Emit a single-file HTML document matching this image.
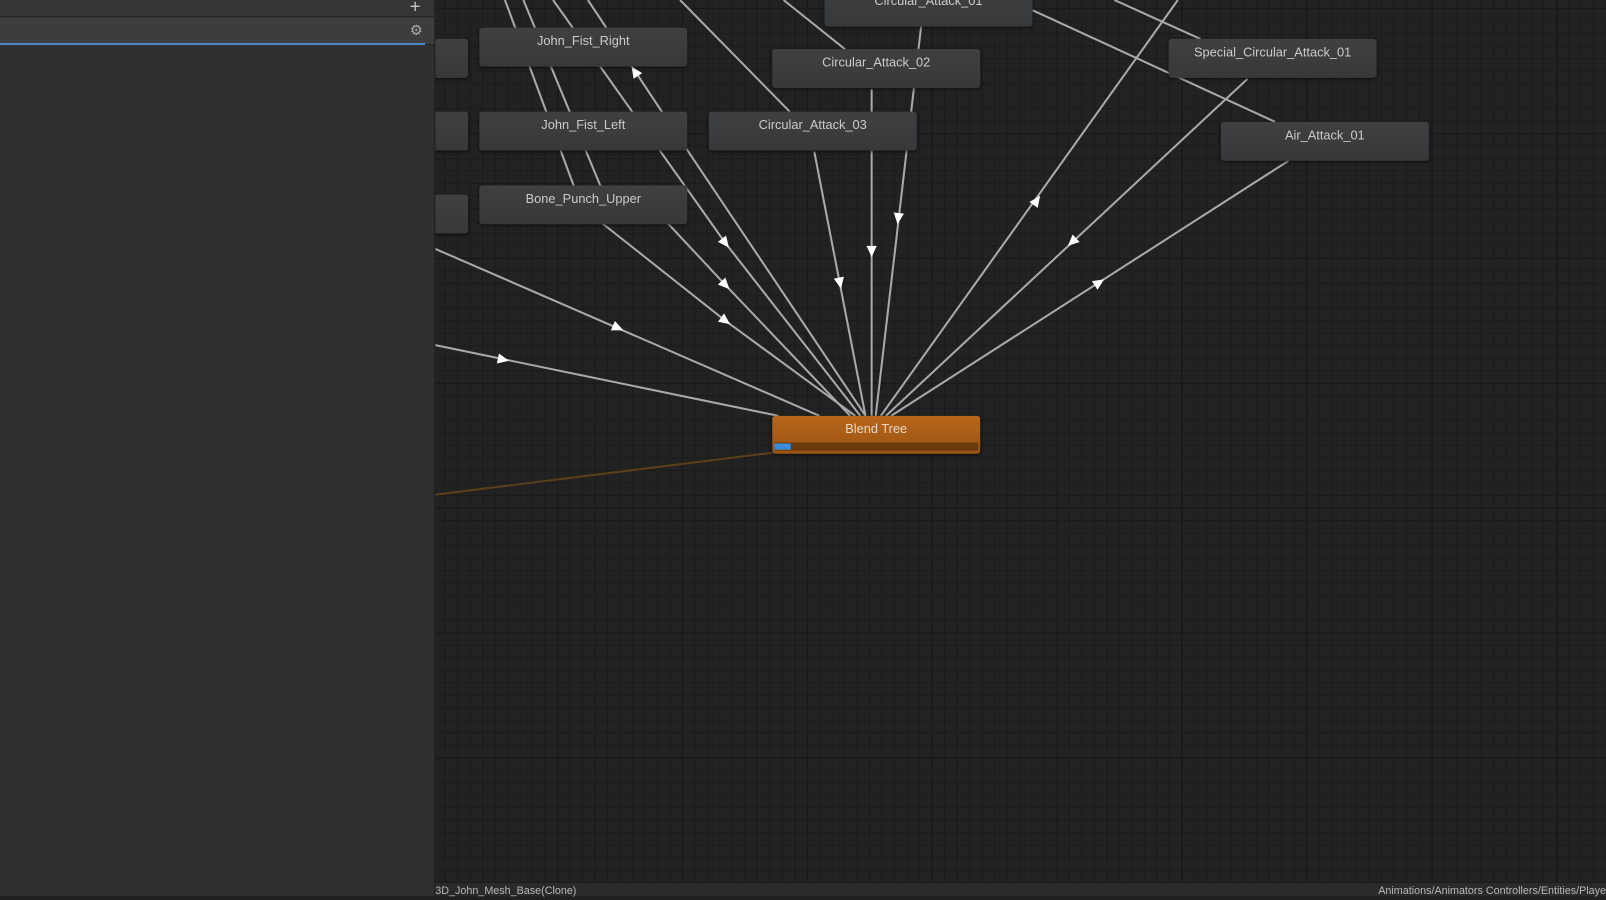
<!DOCTYPE html>
<html><head><meta charset="utf-8"><style>
html,body{margin:0;padding:0;width:1606px;height:896px;overflow:hidden;background:#202020;font-family:"Liberation Sans",sans-serif}
#w{position:absolute;left:0;top:0;width:1568px;height:875px;transform:scale(1.02423);transform-origin:0 0}
#g{position:absolute;left:425px;top:0;width:1143px;height:862px;background-color:#222;
background-image:linear-gradient(#191919 1px,transparent 1px),linear-gradient(90deg,#191919 1px,transparent 1px),linear-gradient(#1b1b1b 1px,transparent 1px),linear-gradient(90deg,#1b1b1b 1px,transparent 1px);
background-size:122px 122px,122px 122px,12.2px 12.2px,12.2px 12.2px;background-position:-3px 8px,-3px 8px,-3px 8px,-3px 8px}
.n{position:absolute;width:203px;height:38px;background:linear-gradient(#3f4042,#37383a);border-radius:3px;box-shadow:0 1px 3px rgba(0,0,0,.6);color:#cbcbcb;font-size:12.5px;text-align:center;line-height:26px}
#lp{position:absolute;left:0;top:0;width:424px;height:875px;background:#2f2f2f;border-right:1px solid #1e1e1e}
#sb{position:absolute;left:425px;top:862px;width:1143px;height:13px;background:#2a2a2a;color:#b8b8b8;font-size:10.5px;line-height:17px}
</style></head><body><div id="w">
<div id="g"></div>
<svg style="position:absolute;left:0;top:0" width="1568" height="862">
<g stroke="#a9a9a9" stroke-width="2" fill="none">
<line x1="425" y1="243" x2="800" y2="406"/>
<line x1="425" y1="337" x2="760" y2="406"/>
<polyline points="493,0 560,181 588,218 708,313 835,406"/>
<polyline points="511,0 586,181 652,218 708,278 830,406"/>
<polyline points="540,0 708,237 840,406"/>
<polyline points="574,0 672,148 845,406"/>
<line x1="664" y1="0" x2="771" y2="109"/>
<line x1="765" y1="0" x2="825" y2="48"/>
<line x1="851" y1="87" x2="851" y2="406"/>
<line x1="900" y1="20" x2="855" y2="406"/>
<line x1="795" y1="148" x2="845" y2="406"/>
<line x1="1150" y1="0" x2="860" y2="406"/>
<line x1="1218" y1="77" x2="865" y2="406"/>
<line x1="1258" y1="157" x2="870" y2="406"/>
<line x1="1008" y1="10" x2="1245" y2="119"/>
<line x1="1088" y1="0" x2="1172" y2="38"/>
</g>
<line x1="425" y1="483" x2="754" y2="442" stroke="#5a3f1c" stroke-width="2"/>
<g fill="#fff">
<polygon points="-5,-5 6,0 -5,5" transform="translate(603,320) rotate(23.5)"/>
<polygon points="-5,-5 6,0 -5,5" transform="translate(491,351) rotate(11.8)"/>
<polygon points="-5,-5 6,0 -5,5" transform="translate(708,237) rotate(52)"/>
<polygon points="-5,-5 6,0 -5,5" transform="translate(708,278) rotate(46)"/>
<polygon points="-5,-5 6,0 -5,5" transform="translate(708,313) rotate(36)"/>
<polygon points="-5,-5 6,0 -5,5" transform="translate(620,70) rotate(236.5)"/>
<polygon points="-5,-5 6,0 -5,5" transform="translate(851,245) rotate(90)"/>
<polygon points="-5,-5 6,0 -5,5" transform="translate(877,213) rotate(96.6)"/>
<polygon points="-5,-5 6,0 -5,5" transform="translate(820,276) rotate(79)"/>
<polygon points="-5,-5 6,0 -5,5" transform="translate(1012,196) rotate(-54.5)"/>
<polygon points="-5,-5 6,0 -5,5" transform="translate(1047,236) rotate(137)"/>
<polygon points="-5,-5 6,0 -5,5" transform="translate(1073,276) rotate(-32.7)"/>
</g>
</svg>
<div class="n" style="left:805px;top:-12px">Circular_Attack_01</div>
<div class="n" style="left:468px;top:27px">John_Fist_Right</div>
<div class="n" style="left:754px;top:48px">Circular_Attack_02</div>
<div class="n" style="left:1141px;top:38px">Special_Circular_Attack_01</div>
<div class="n" style="left:1192px;top:119px">Air_Attack_01</div>
<div class="n" style="left:468px;top:109px">John_Fist_Left</div>
<div class="n" style="left:692px;top:109px">Circular_Attack_03</div>
<div class="n" style="left:468px;top:181px">Bone_Punch_Upper</div>
<div class="n" style="left:395px;top:38px;width:62px"></div>
<div class="n" style="left:395px;top:109px;width:62px"></div>
<div class="n" style="left:395px;top:190px;width:62px"></div>
<div class="n" style="left:754px;top:406px;height:37px;background:linear-gradient(#b8661a,#9a5414);color:#e8d8c8">Blend Tree
<div style="position:absolute;left:2px;right:2px;top:26px;height:8px;background:#6a3a0e"><div style="width:16px;height:6px;margin-top:1px;background:#3a8ee0"></div></div></div>
<div id="lp">
<div style="height:16px;background:#353535;border-bottom:1px solid #1e1e1e;position:relative"><span style="position:absolute;left:400px;top:-4px;color:#c8c8c8;font-size:18px">+</span></div>
<div style="height:26px;background:#3d3d3d;position:relative;border-bottom:1px solid #222"><span style="position:absolute;left:400px;top:4px;color:#aaa;font-size:14px">⚙</span><div style="position:absolute;left:0;top:25px;width:415px;height:2px;background:#4a86c8"></div></div>
</div>
<div id="sb"><span style="position:absolute;left:0">3D_John_Mesh_Base(Clone)</span><span style="position:absolute;right:0">Animations/Animators Controllers/Entities/Playe</span></div>
</div></body></html>
